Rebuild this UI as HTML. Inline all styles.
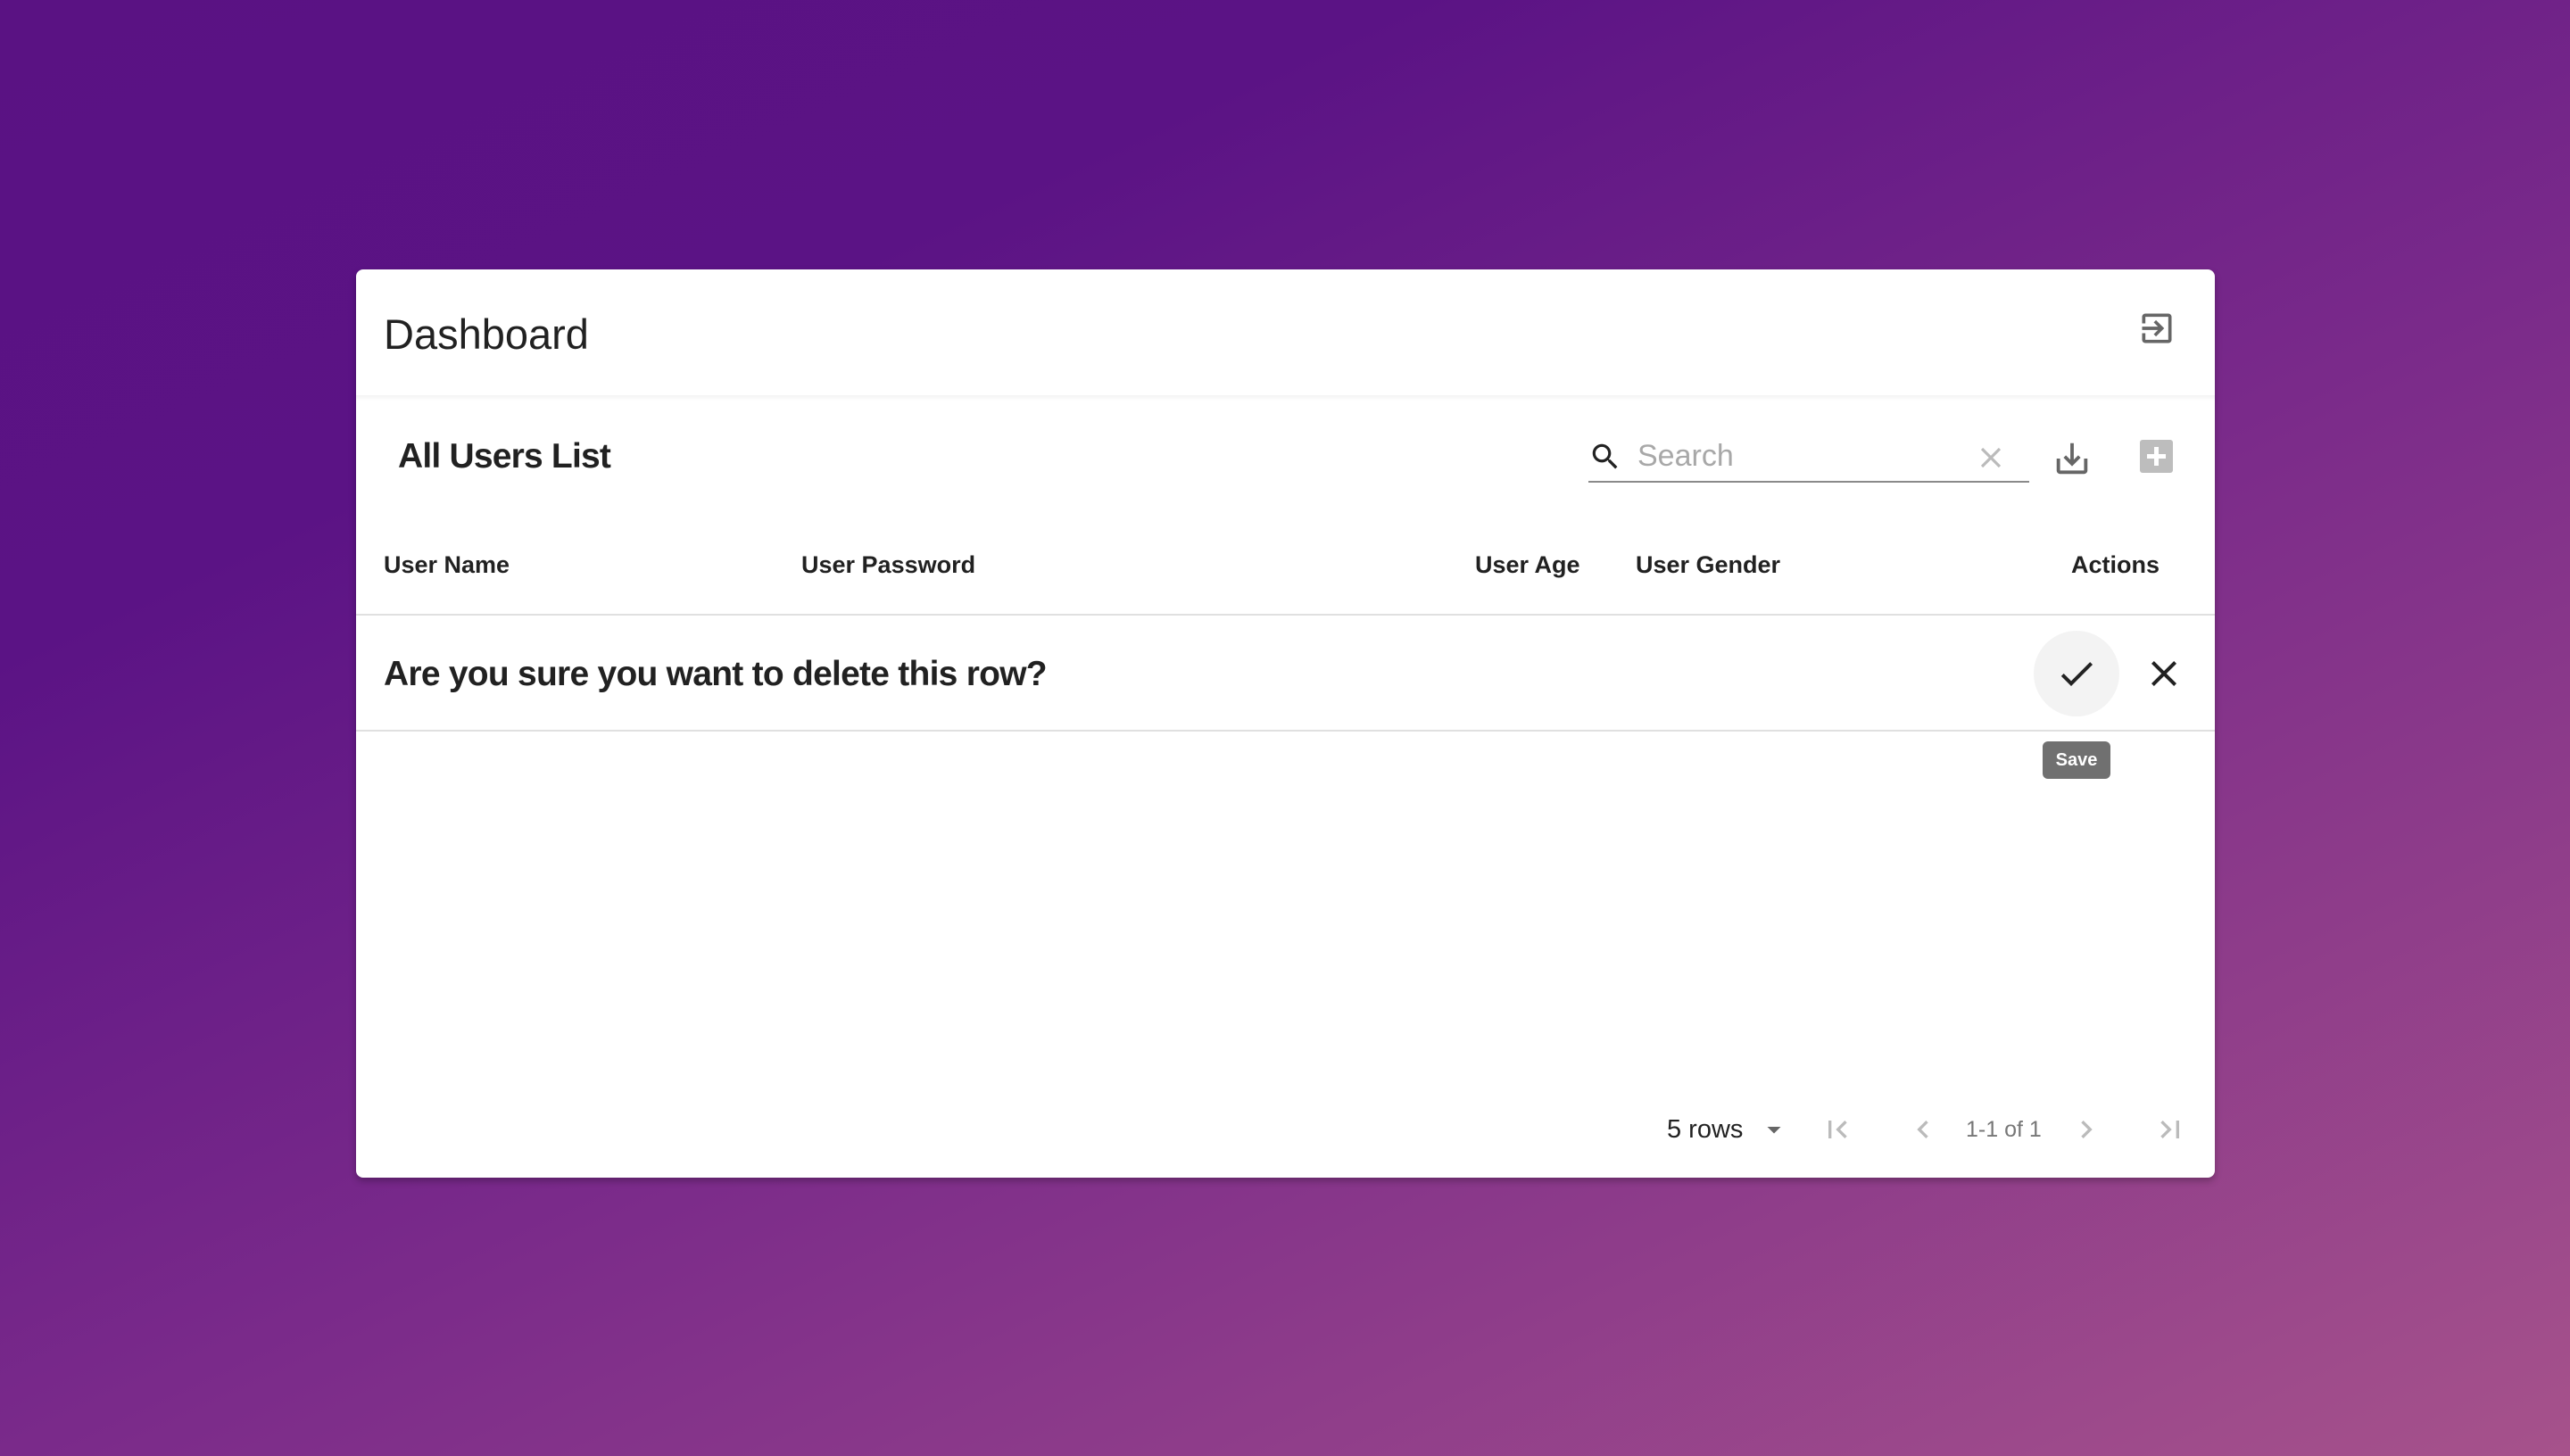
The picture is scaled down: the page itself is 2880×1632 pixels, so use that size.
<!DOCTYPE html>
<html><head><meta charset="utf-8"><style>
*{margin:0;padding:0;box-sizing:border-box}
body{width:2880px;height:1632px;overflow:hidden;font-family:"Liberation Sans",Arial,sans-serif;background:linear-gradient(155deg,#5a1283 0%,#5b1385 25%,#7a2a8a 55%,#a6528b 100%);position:relative;color:rgba(0,0,0,.87)}
.card{position:absolute;left:399px;top:302px;width:2083px;height:1018px;background:#fff;border-radius:8px;box-shadow:0 4px 8px rgba(0,0,0,.25)}
.t{position:absolute;white-space:nowrap;line-height:1}
.hdiv{position:absolute;left:0;right:0;top:141px;height:6px;background:linear-gradient(#f3f3f3,#fff)}
.line{position:absolute;left:0;right:0;height:2px;background:#e0e0e0}
svg{position:absolute}
</style></head><body>
<div class="card">
 <div class="t" style="left:31px;top:49px;font-size:47px;">Dashboard</div>
 <svg style="left:1996px;top:44px" width="44" height="44" viewBox="0 0 24 24"><path fill="#666" d="M10.09 15.59 11.5 17l5-5-5-5-1.41 1.41L12.67 11H3v2h9.67zM19 3H5c-1.11 0-2 .9-2 2v4h2V5h14v14H5v-4H3v4c0 1.1.89 2 2 2h14c1.1 0 2-.9 2-2V5c0-1.1-.9-2-2-2"/></svg>
 <div class="hdiv"></div>
 <div class="t" style="left:47px;top:190px;font-size:39px;font-weight:bold;letter-spacing:-0.8px">All Users List</div>
 <svg style="left:1381px;top:191px" width="38" height="38" viewBox="0 0 24 24"><path fill="#222" d="M15.5 14h-.79l-.28-.27C15.41 12.59 16 11.110 16 9.5 16 5.91 13.09 3 9.5 3S3 5.91 3 9.5 5.91 16 9.5 16c1.61 0 3.09-.59 4.23-1.57l.27.28v.79l5 4.99L20.49 19zm-6 0C7.01 14 5 11.99 5 9.5S7.01 5 9.5 5 14 7.01 14 9.5 11.99 14 9.5 14"/></svg>
 <div class="t" style="left:1436px;top:192px;font-size:34px;color:#a8a8a8">Search</div>
 <svg style="left:1813px;top:192px" width="38" height="38" viewBox="0 0 24 24"><path fill="#bbb" d="M19 6.41 17.59 5 12 10.59 6.41 5 5 6.41 10.59 12 5 17.59 6.41 19 12 13.41 17.59 19 19 17.590 13.41 12z"/></svg>
 <div style="position:absolute;left:1381px;top:237px;width:494px;height:2px;background:#8a8a8a"></div>
 <svg style="left:1900px;top:189px" width="46" height="46" viewBox="0 0 24 24"><path fill="#666" d="M19 12v7H5v-7H3v7c0 1.1.9 2 2 2h14c1.1 0 2-.9 2-2v-7zm-6 .67 2.59-2.58L17 11.5l-5 5-5-5 1.41-1.41L11 12.67V3h2z"/></svg>
 <div style="position:absolute;left:1999px;top:191px;width:37px;height:37px;background:#bdbdbd;border-radius:3px"></div>
 <div style="position:absolute;left:2015px;top:199px;width:5px;height:21px;background:#fff"></div>
 <div style="position:absolute;left:2007px;top:207px;width:21px;height:5px;background:#fff"></div>
 <div class="t" style="left:31px;top:318px;font-size:27px;font-weight:bold">User Name</div>
 <div class="t" style="left:499px;top:318px;font-size:27px;font-weight:bold">User Password</div>
 <div class="t" style="left:1254px;top:318px;font-size:27px;font-weight:bold">User Age</div>
 <div class="t" style="left:1434px;top:318px;font-size:27px;font-weight:bold">User Gender</div>
 <div class="t" style="left:1922px;top:318px;font-size:27px;font-weight:bold">Actions</div>
 <div class="line" style="top:386px"></div>
 <div class="t" style="left:31px;top:434px;font-size:39px;font-weight:bold;letter-spacing:-0.75px">Are you sure you want to delete this row?</div>
 <div style="position:absolute;left:1880px;top:405px;width:96px;height:96px;border-radius:50%;background:#f3f3f3"></div>
 <svg style="left:1904px;top:429px" width="48" height="48" viewBox="0 0 24 24"><path fill="#222" d="M9 16.17 4.83 12l-1.42 1.41L9 19 21 7l-1.41-1.41z"/></svg>
 <svg style="left:2002px;top:429px" width="48" height="48" viewBox="0 0 24 24"><path fill="#222" d="M19 6.41 17.59 5 12 10.59 6.41 5 5 6.41 10.59 12 5 17.59 6.41 19 12 13.41 17.59 19 19 17.59 13.41 12z"/></svg>
 <div class="line" style="top:516px"></div>
 <div style="position:absolute;left:1890px;top:529px;width:76px;height:42px;background:#707070;border-radius:6px;color:#fff;font-size:20px;font-weight:bold;text-align:center;line-height:42px">Save</div>
 <div class="t" style="left:1469px;top:950px;font-size:29px">5 rows</div>
 <svg style="left:1571px;top:946px" width="36" height="36" viewBox="0 0 24 24"><path fill="#666" d="m7 10 5 5 5-5z"/></svg>
 <svg style="left:1640px;top:944px" width="40" height="40" viewBox="0 0 24 24"><path fill="#bbb" d="M18.41 16.59 13.82 12l4.59-4.59L17 6l-6 6 6 6zM6 6h2v12H6z"/></svg>
 <svg style="left:1736px;top:944px" width="40" height="40" viewBox="0 0 24 24"><path fill="#bbb" d="M15.41 7.41 14 6l-6 6 6 6 1.41-1.41L10.83 12z"/></svg>
 <div class="t" style="left:1804px;top:952px;font-size:25px;color:#777">1-1 of 1</div>
 <svg style="left:1919px;top:944px" width="40" height="40" viewBox="0 0 24 24"><path fill="#bbb" d="M10 6 8.59 7.41 13.17 12l-4.58 4.59L10 18l6-6z"/></svg>
 <svg style="left:2013px;top:944px" width="40" height="40" viewBox="0 0 24 24"><path fill="#bbb" d="M5.59 7.41 10.18 12l-4.59 4.59L7 18l6-6-6-6zM16 6h2v12h-2z"/></svg>
</div>
</body></html>
